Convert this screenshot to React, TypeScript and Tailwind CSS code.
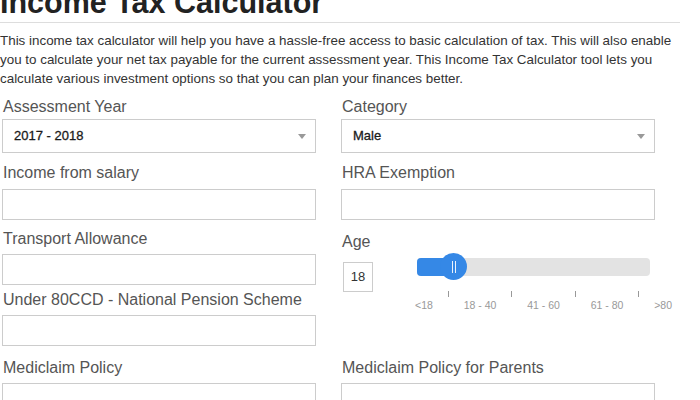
const font = { fontFamily: '"Liberation Sans", Arial, sans-serif' }

function Label({ children, className = "" }: { children: React.ReactNode; className?: string }) {
  return <div className={"pl-[1px] text-[16px] leading-[20px] text-[#555] " + className}>{children}</div>
}

function Select({ value }: { value: string }) {
  return (
    <div className="mt-[2px] h-[34px] border border-[#ccc] bg-white flex items-center justify-between pl-[11px] pr-[9px]">
      <span className="text-[13px] text-[#1a1a1a] [-webkit-text-stroke:0.3px_#1a1a1a]">{value}</span>
      <span className="w-0 h-0 border-t-[5px] border-t-[#999] border-x-[4px] border-x-transparent" />
    </div>
  )
}

function TextInput({ className = "" }: { className?: string }) {
  return <input type="text" className={"block w-full h-[31px] border border-[#ccc] bg-white outline-none " + className} />
}

export default function App() {
  return (
    <main className="bg-white min-h-screen overflow-hidden w-[700px] h-[400px]" style={font}>
      <div className="w-[680px]">
        {/* Heading */}
        <h1 className="-mt-[13px] pb-[5px] border-b border-[#ddd] text-[30.5px] leading-[30px] font-bold text-[#222]">
          Income Tax Calculator
        </h1>

        <p className="mt-[8px] text-[13.4px] leading-[19px] text-[#333]">
          This income tax calculator will help you have a hassle-free access to basic calculation of tax. This will also enable
          you to calculate your net tax payable for the current assessment year. This Income Tax Calculator tool lets you
          calculate various investment options so that you can plan your finances better.
        </p>

        {/* Form */}
        <div className="ml-[2px] grid grid-cols-[314px_314px] gap-x-[25px]">
          <div className="mt-[9px]">
            <Label>Assessment Year</Label>
            <Select value="2017 - 2018" />
          </div>
          <div className="mt-[9px]">
            <Label>Category</Label>
            <Select value="Male" />
          </div>

          <div className="mt-[10px]">
            <Label className="mb-[6px]">Income from salary</Label>
            <TextInput />
          </div>
          <div className="mt-[10px]">
            <Label className="mb-[6px]">HRA Exemption</Label>
            <TextInput />
          </div>

          <div className="mt-[9px]">
            <Label className="mb-[5px]">Transport Allowance</Label>
            <TextInput />
            <Label className="mt-[5px] mb-[5px]">Under 80CCD - National Pension Scheme</Label>
            <TextInput />
          </div>
          <div className="mt-[12px]">
            <Label>Age</Label>
            <div className="flex mt-[10px]">
              <div className="ml-[2px] w-[30px] h-[30px] border border-[#ccc] flex items-center justify-center text-[13px] text-[#333]">
                18
              </div>
              <div className="ml-[44px] w-[233px] -mt-[4px]">
                {/* track */}
                <div className="relative h-[18px] rounded-[4px] bg-[#e3e3e3]">
                  <div className="absolute left-0 top-0 h-[18px] w-[36px] rounded-l-[4px] bg-[#3588e6]" />
                  <div className="absolute left-[23px] -top-[5px] w-[27px] h-[27px] rounded-full bg-[#3588e6] flex items-center justify-center gap-[2px]">
                    <span className="w-px h-[12px] bg-white/90" />
                    <span className="w-px h-[12px] bg-white/90" />
                  </div>
                </div>
                {/* scale */}
                <div className="mt-[15px] -ml-[2px] w-[257px] flex justify-between text-[10.5px] leading-[12px] text-[#999]">
                  <span className="mt-[8px]">&lt;18</span>
                  <span className="w-px h-[6px] bg-[#999]" />
                  <span className="mt-[8px]">18 - 40</span>
                  <span className="w-px h-[6px] bg-[#999]" />
                  <span className="mt-[8px]">41 - 60</span>
                  <span className="w-px h-[6px] bg-[#999]" />
                  <span className="mt-[8px]">61 - 80</span>
                  <span className="w-px h-[6px] bg-[#999]" />
                  <span className="mt-[8px]">&gt;80</span>
                </div>
              </div>
            </div>
          </div>

          <div className="mt-[12px]">
            <Label className="mb-[5px]">Mediclaim Policy</Label>
            <TextInput />
          </div>
          <div className="mt-[12px]">
            <Label className="mb-[5px]">Mediclaim Policy for Parents</Label>
            <TextInput />
          </div>
        </div>
      </div>
    </main>
  )
}
